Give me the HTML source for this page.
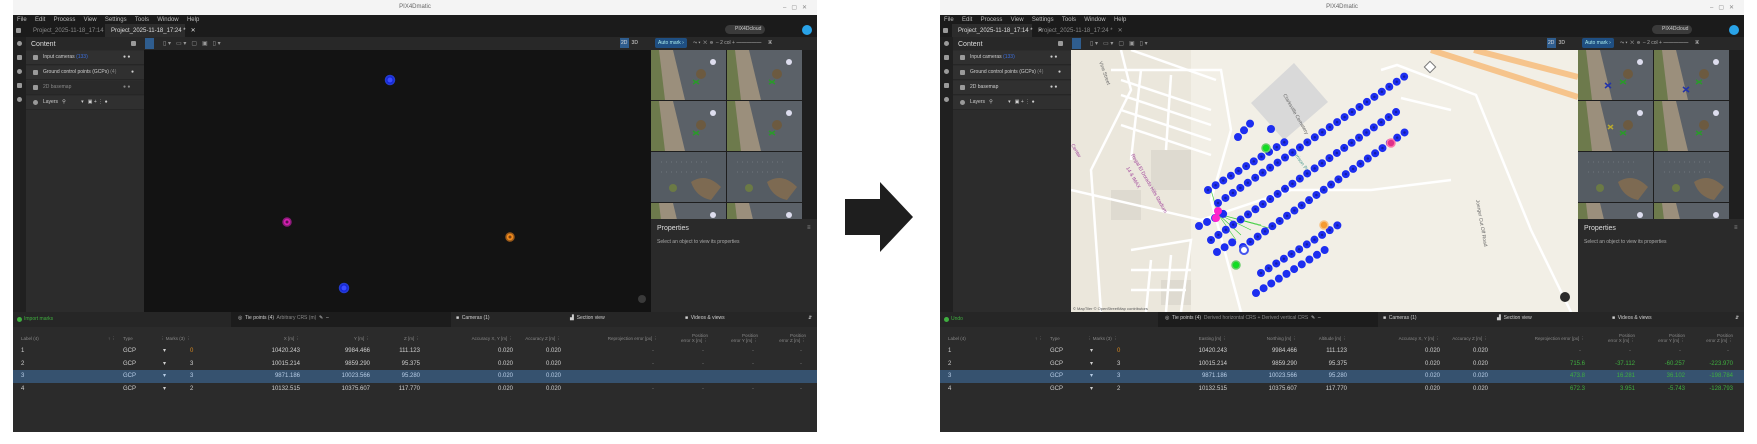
<!DOCTYPE html>
<html><head><meta charset="utf-8">
<style>
*{margin:0;padding:0;box-sizing:border-box}
body{width:1757px;height:444px;background:#fff;position:relative;overflow:hidden;font-family:"Liberation Sans",sans-serif;color:#cfcfcf}
.win{position:absolute;top:0;width:804px;height:432px;background:#2b2b2b;overflow:hidden}
.a{position:absolute}
.t{position:absolute;font-size:6px;white-space:nowrap;line-height:1}
.title{left:0;top:0;width:804px;height:15px;background:#f4f4f4;color:#666;font-size:6px;text-align:center;line-height:15px}
.menu{left:0;top:15px;width:804px;height:22px;background:#1b1b1b}
.tool{left:13px;top:37px;width:791px;height:13px;background:#282828}
.side{left:0;top:37px;width:13px;height:395px;background:#202020}
.cpan{left:13px;top:50px;width:118px;height:262px;background:#2c2c2c}
.row{position:absolute;left:13px;width:118px;height:14px;background:#303030;border-bottom:1px solid #262626}
.vp{left:131px;top:50px;width:507px;height:262px;background:#131313;overflow:hidden}
.rp{left:638px;top:50px;width:152px;height:169px;background:#1e1e1e}
.sc{left:790px;top:50px;width:14px;height:262px;background:#1f1f1f}
.prop{left:638px;top:219px;width:166px;height:93px;background:#2a2a2a}
.btab{left:0;top:312px;width:804px;height:15px;background:#262626}
.tbl{left:0;top:327px;width:804px;height:105px;background:#2b2b2b}
.sel{left:0;top:370px;width:804px;height:13px;background:#36526f}
.r{text-align:right}
.g{color:#3fae3f}
.icon{position:absolute;width:5px;height:5px;border-radius:1px;background:#9a9a9a}
</style></head><body>

<!-- ============ LEFT WINDOW ============ -->
<div class="win" style="left:13px">
 <div class="a title">PIX4Dmatic</div>
 <div class="t" style="left:770px;top:5px;color:#888">–&nbsp;&nbsp;&nbsp;▢&nbsp;&nbsp;&nbsp;✕</div>
 <div class="a menu"></div>
 <div class="t" style="left:4px;top:17px;color:#bbb">File&nbsp;&nbsp;&nbsp;&nbsp;&nbsp;Edit&nbsp;&nbsp;&nbsp;&nbsp;&nbsp;Process&nbsp;&nbsp;&nbsp;&nbsp;&nbsp;View&nbsp;&nbsp;&nbsp;&nbsp;&nbsp;Settings&nbsp;&nbsp;&nbsp;&nbsp;&nbsp;Tools&nbsp;&nbsp;&nbsp;&nbsp;&nbsp;Window&nbsp;&nbsp;&nbsp;&nbsp;&nbsp;Help</div>
 <div class="a" style="left:3px;top:28px;width:5px;height:5px;background:#999;border-radius:1px"></div>
 <div class="t" style="left:20px;top:28px;color:#888">Project_2025-11-18_17:14 *&nbsp;&nbsp;&nbsp;✕</div>
 <div class="a" style="left:92px;top:24px;width:80px;height:13px;background:#2c2c2c"></div>
 <div class="t" style="left:98px;top:28px;color:#ddd">Project_2025-11-18_17:24 *&nbsp;&nbsp;&nbsp;✕</div>
 <div class="a" style="left:712px;top:25px;width:40px;height:9px;background:#3a3a3a;border-radius:5px"></div>
 <div class="t" style="left:722px;top:27px;color:#ccc;font-size:5px">PIX4Dcloud</div>
 <div class="a" style="left:789px;top:25px;width:10px;height:10px;background:#29a3e8;border-radius:50%"></div>
 <div class="a tool"></div>
 <div class="a side"></div>
 <div class="icon" style="left:4px;top:41px;border-radius:50%"></div>
 <div class="icon" style="left:4px;top:55px"></div><div class="icon" style="left:4px;top:69px;border-radius:50%"></div><div class="icon" style="left:4px;top:83px"></div><div class="icon" style="left:4px;top:97px;border-radius:50%"></div>
 <div class="t" style="left:18px;top:41px;color:#ddd;font-size:7px">Content</div>
 <div class="icon" style="left:118px;top:41px"></div>
 <div class="a" style="left:132px;top:38px;width:9px;height:11px;background:#2f5d8e"></div>
 <div class="t" style="left:150px;top:41px;color:#999">▯ ▾&nbsp;&nbsp;&nbsp;▭ ▾&nbsp;&nbsp;&nbsp;▢&nbsp;&nbsp;&nbsp;▣&nbsp;&nbsp;&nbsp;▯ ▾</div>
 <div class="a cpan"></div>
 <div class="row" style="top:51px"></div><div class="row" style="top:66px"></div><div class="row" style="top:81px;background:#2a2a2a"></div><div class="row" style="top:96px"></div>
 <div class="icon" style="left:20px;top:55px"></div><div class="t" style="left:30px;top:55px;font-size:5px">Input cameras <span style="color:#3c6fe0">(133)</span></div><div class="t" style="left:110px;top:55px;font-size:5px">● ●</div>
 <div class="icon" style="left:20px;top:70px"></div><div class="t" style="left:30px;top:70px;font-size:5px">Ground control points (GCPs) <span style="color:#888">(4)</span></div><div class="t" style="left:118px;top:70px;font-size:5px">●</div>
 <div class="icon" style="left:20px;top:85px"></div><div class="t" style="left:30px;top:85px;font-size:5px;color:#888">2D basemap</div><div class="t" style="left:110px;top:85px;font-size:5px;color:#888">● ●</div>
 <div class="icon" style="left:20px;top:100px;border-radius:50%"></div><div class="t" style="left:30px;top:100px;font-size:5px">Layers&nbsp;&nbsp;&nbsp;⚲&nbsp;&nbsp;&nbsp;&nbsp;&nbsp;&nbsp;&nbsp;&nbsp;&nbsp;&nbsp;&nbsp;▾&nbsp;&nbsp;&nbsp;▣&nbsp;+&nbsp;⋮&nbsp;●</div>
 <div class="a vp"></div>
 <div class="a" style="left:607px;top:38px;width:9px;height:10px;background:#2f5d8e"></div>
 <div class="t" style="left:608px;top:41px;font-size:5px;color:#ddd">2D&nbsp;&nbsp;&nbsp;3D</div>
 <svg class="a" style="left:0;top:0" width="804" height="432">
  <circle cx="377" cy="80" r="4.5" fill="#1525d8" stroke="#233bd0" stroke-width="1.5"/><circle cx="377" cy="80" r="2.5" fill="#3a4cff"/>
  <circle cx="274" cy="222" r="4" fill="#d41fb0" stroke="#8a1a78" stroke-width="1.5"/><circle cx="274" cy="222" r="1.5" fill="#5a1050"/>
  <circle cx="497" cy="237" r="4" fill="#f08a1c" stroke="#9a5a1a" stroke-width="1.5"/><circle cx="497" cy="237" r="1.5" fill="#7a4010"/>
  <circle cx="331" cy="288" r="4.5" fill="#1525d8" stroke="#233bd0" stroke-width="1.5"/><circle cx="331" cy="288" r="2.5" fill="#3a4cff"/>
  <circle cx="629" cy="299" r="4" fill="#3a3a3a"/>
 </svg>
 <!-- right panel -->
 <div class="a" style="left:642px;top:38px;width:32px;height:10px;background:#1f4f82;border-radius:2px"></div>
 <div class="t" style="left:645px;top:41px;font-size:5px;color:#aee">Auto mark ›</div>
 <div class="t" style="left:680px;top:41px;font-size:5px;color:#aaa">⤳ ▾&nbsp;&nbsp;✕&nbsp;&nbsp;⊖&nbsp;&nbsp;–&nbsp;2 col&nbsp;+&nbsp;━━━━━&nbsp;&nbsp;&nbsp;&nbsp;&nbsp;▣</div>
 <div class="a rp"></div>
 <svg class="a" style="left:638px;top:50px" width="152" height="169">
  <defs>
   <g id="th"><rect width="75" height="50" fill="#5b6168"/><path d="M0 0H22L34 50H0Z" fill="#9b8f7c"/><path d="M0 0H8L14 50H0Z" fill="#6d7a4c"/><circle cx="50" cy="24" r="5" fill="#6c5a40"/><circle cx="62" cy="12" r="3" fill="#dde"/><path d="M42 30l6 4M48 30l-6 4" stroke="#2a9a2a" stroke-width="1.5"/></g>
   <g id="th2"><rect width="75" height="50" fill="#555c63"/><path d="M40 30Q55 20 70 35L60 48Q45 45 40 30Z" fill="#7d6a52"/><path d="M10 10h50M10 20h50" stroke="#8a9096" stroke-width=".5" stroke-dasharray="1 4"/><circle cx="22" cy="36" r="4" fill="#6b7a45"/></g>
  </defs>
  <use href="#th" x="0" y="0"/><use href="#th" x="76" y="0"/>
  <use href="#th" x="0" y="51"/><use href="#th" x="76" y="51"/>
  <use href="#th2" x="0" y="102"/><use href="#th2" x="76" y="102"/>
  <use href="#th" x="0" y="153"/><use href="#th" x="76" y="153"/>
 </svg>
 <div class="a sc"></div>
 <div class="a prop"></div>
 <div class="t" style="left:644px;top:225px;font-size:7px;color:#ddd">Properties</div>
 <div class="t" style="left:644px;top:240px;font-size:5px;color:#aaa">Select an object to view its properties</div>
 <div class="t" style="left:794px;top:225px;color:#999">≡</div>
 <!-- bottom -->
 <div class="a btab"></div>
 <div class="a" style="left:218px;top:312px;width:220px;height:15px;background:#1c1c1c"></div>
 <div class="a" style="left:4px;top:317px;width:5px;height:5px;border-radius:50%;background:#3fae3f"></div>
 <div class="t g" style="left:11px;top:317px;font-size:5px">Import marks</div>
 <div class="t" style="left:225px;top:316px;font-size:5px">◎&nbsp; Tie points (4)&nbsp; <span style="color:#888">Arbitrary CRS (m)</span>&nbsp;&nbsp;✎&nbsp;&nbsp;–</div>
 <div class="t" style="left:443px;top:316px;font-size:5px">■&nbsp;&nbsp;Cameras (1)</div>
 <div class="t" style="left:557px;top:316px;font-size:5px">▟&nbsp;&nbsp;Section view</div>
 <div class="t" style="left:672px;top:316px;font-size:5px">■&nbsp;&nbsp;Videos &amp; views</div>
 <div class="t" style="left:795px;top:316px;font-size:5px">⇵</div>
 <div class="a tbl"></div>
 <div class="a sel"></div>
 <div class="t" style="left:8px;top:337px;font-size:4.5px;color:#888">Label (4)</div>
 <div class="t" style="left:95px;top:337px;font-size:4.5px;color:#888">↑ ⋮</div>
 <div class="t" style="left:110px;top:337px;font-size:4.5px;color:#888">Type</div>
 <div class="t" style="left:147px;top:337px;font-size:4.5px;color:#888">⋮ Marks (3) ⋮</div>
 <div class="t r" style="right:517px;top:337px;font-size:4.5px;color:#888">X [m] ⋮</div>
 <div class="t r" style="right:447px;top:337px;font-size:4.5px;color:#888">Y [m] ⋮</div>
 <div class="t r" style="right:397px;top:337px;font-size:4.5px;color:#888">Z [m] ⋮</div>
 <div class="t r" style="right:304px;top:337px;font-size:4.5px;color:#888">Accuracy X, Y [m] ⋮</div>
 <div class="t r" style="right:256px;top:337px;font-size:4.5px;color:#888">Accuracy Z [m] ⋮</div>
 <div class="t r" style="right:159px;top:337px;font-size:4.5px;color:#888">Reprojection error [px] ⋮</div>
 <div class="t r" style="right:109px;top:334px;font-size:4.5px;color:#888">Position<br>error X [m] ⋮</div>
 <div class="t r" style="right:59px;top:334px;font-size:4.5px;color:#888">Position<br>error Y [m] ⋮</div>
 <div class="t r" style="right:11px;top:334px;font-size:4.5px;color:#888">Position<br>error Z [m] ⋮</div>
 <div style="position:absolute;left:0;top:348px;width:804px;font-size:5px">
  <div style="position:relative;height:12.5px"><span class="t" style="left:8px">1</span><span class="t" style="left:110px">GCP</span><span class="t" style="left:150px">▾</span><span class="t" style="left:177px;color:#d98a20">0</span><span class="t r" style="right:517px">10420.243</span><span class="t r" style="right:447px">9984.466</span><span class="t r" style="right:397px">111.123</span><span class="t r" style="right:304px">0.020</span><span class="t r" style="right:256px">0.020</span><span class="t r" style="right:163px;color:#777">-</span><span class="t r" style="right:113px;color:#777">-</span><span class="t r" style="right:63px;color:#777">-</span><span class="t r" style="right:15px;color:#777">-</span></div>
  <div style="position:relative;height:12.5px"><span class="t" style="left:8px">2</span><span class="t" style="left:110px">GCP</span><span class="t" style="left:150px">▾</span><span class="t" style="left:177px">3</span><span class="t r" style="right:517px">10015.214</span><span class="t r" style="right:447px">9859.290</span><span class="t r" style="right:397px">95.375</span><span class="t r" style="right:304px">0.020</span><span class="t r" style="right:256px">0.020</span><span class="t r" style="right:163px;color:#777">-</span><span class="t r" style="right:113px;color:#777">-</span><span class="t r" style="right:63px;color:#777">-</span><span class="t r" style="right:15px;color:#777">-</span></div>
  <div style="position:relative;height:12.5px;color:#b8cde6"><span class="t" style="left:8px">3</span><span class="t" style="left:110px">GCP</span><span class="t" style="left:150px">▾</span><span class="t" style="left:177px">3</span><span class="t r" style="right:517px">9871.186</span><span class="t r" style="right:447px">10023.566</span><span class="t r" style="right:397px">95.280</span><span class="t r" style="right:304px">0.020</span><span class="t r" style="right:256px">0.020</span></div>
  <div style="position:relative;height:12.5px"><span class="t" style="left:8px">4</span><span class="t" style="left:110px">GCP</span><span class="t" style="left:150px">▾</span><span class="t" style="left:177px">2</span><span class="t r" style="right:517px">10132.515</span><span class="t r" style="right:447px">10375.607</span><span class="t r" style="right:397px">117.770</span><span class="t r" style="right:304px">0.020</span><span class="t r" style="right:256px">0.020</span><span class="t r" style="right:163px;color:#777">-</span><span class="t r" style="right:113px;color:#777">-</span><span class="t r" style="right:63px;color:#777">-</span><span class="t r" style="right:15px;color:#777">-</span></div>
 </div>
</div>

<!-- ARROW -->
<svg class="a" style="left:840px;top:178px" width="80" height="80"><path d="M5 21H40V4L73 39L40 74V57H5Z" fill="#1e1e1e"/></svg>

<!-- ============ RIGHT WINDOW ============ -->
<div class="win" style="left:940px">
 <div class="a title">PIX4Dmatic</div>
 <div class="t" style="left:770px;top:5px;color:#888">–&nbsp;&nbsp;&nbsp;▢&nbsp;&nbsp;&nbsp;✕</div>
 <div class="a menu"></div>
 <div class="t" style="left:4px;top:17px;color:#bbb">File&nbsp;&nbsp;&nbsp;&nbsp;&nbsp;Edit&nbsp;&nbsp;&nbsp;&nbsp;&nbsp;Process&nbsp;&nbsp;&nbsp;&nbsp;&nbsp;View&nbsp;&nbsp;&nbsp;&nbsp;&nbsp;Settings&nbsp;&nbsp;&nbsp;&nbsp;&nbsp;Tools&nbsp;&nbsp;&nbsp;&nbsp;&nbsp;Window&nbsp;&nbsp;&nbsp;&nbsp;&nbsp;Help</div>
 <div class="a" style="left:3px;top:28px;width:5px;height:5px;background:#999;border-radius:1px"></div>
 <div class="a" style="left:12px;top:24px;width:80px;height:13px;background:#2c2c2c"></div>
 <div class="t" style="left:18px;top:28px;color:#ddd">Project_2025-11-18_17:14 *&nbsp;&nbsp;&nbsp;✕</div>
 <div class="t" style="left:98px;top:28px;color:#888">Project_2025-11-18_17:24 *&nbsp;&nbsp;&nbsp;✕</div>
 <div class="a" style="left:712px;top:25px;width:40px;height:9px;background:#3a3a3a;border-radius:5px"></div>
 <div class="t" style="left:722px;top:27px;color:#ccc;font-size:5px">PIX4Dcloud</div>
 <div class="a" style="left:789px;top:25px;width:10px;height:10px;background:#29a3e8;border-radius:50%"></div>
 <div class="a tool"></div>
 <div class="a side"></div>
 <div class="icon" style="left:4px;top:41px;border-radius:50%"></div>
 <div class="icon" style="left:4px;top:55px"></div><div class="icon" style="left:4px;top:69px;border-radius:50%"></div><div class="icon" style="left:4px;top:83px"></div><div class="icon" style="left:4px;top:97px;border-radius:50%"></div>
 <div class="t" style="left:18px;top:41px;color:#ddd;font-size:7px">Content</div>
 <div class="icon" style="left:118px;top:41px"></div>
 <div class="a" style="left:132px;top:38px;width:9px;height:11px;background:#2f5d8e"></div>
 <div class="t" style="left:150px;top:41px;color:#999">▯ ▾&nbsp;&nbsp;&nbsp;▭ ▾&nbsp;&nbsp;&nbsp;▢&nbsp;&nbsp;&nbsp;▣&nbsp;&nbsp;&nbsp;▯ ▾</div>
 <div class="a cpan"></div>
 <div class="row" style="top:51px"></div><div class="row" style="top:66px"></div><div class="row" style="top:81px"></div><div class="row" style="top:96px"></div>
 <div class="icon" style="left:20px;top:55px"></div><div class="t" style="left:30px;top:55px;font-size:5px">Input cameras <span style="color:#3c6fe0">(133)</span></div><div class="t" style="left:110px;top:55px;font-size:5px">● ●</div>
 <div class="icon" style="left:20px;top:70px"></div><div class="t" style="left:30px;top:70px;font-size:5px">Ground control points (GCPs) <span style="color:#888">(4)</span></div><div class="t" style="left:118px;top:70px;font-size:5px">●</div>
 <div class="icon" style="left:20px;top:85px"></div><div class="t" style="left:30px;top:85px;font-size:5px">2D basemap</div><div class="t" style="left:110px;top:85px;font-size:5px">● ●</div>
 <div class="icon" style="left:20px;top:100px;border-radius:50%"></div><div class="t" style="left:30px;top:100px;font-size:5px">Layers&nbsp;&nbsp;&nbsp;⚲&nbsp;&nbsp;&nbsp;&nbsp;&nbsp;&nbsp;&nbsp;&nbsp;&nbsp;&nbsp;&nbsp;▾&nbsp;&nbsp;&nbsp;▣&nbsp;+&nbsp;⋮&nbsp;●</div>
 <div class="a" style="left:607px;top:38px;width:9px;height:10px;background:#2f5d8e"></div>
 <div class="t" style="left:608px;top:41px;font-size:5px;color:#ddd">2D&nbsp;&nbsp;&nbsp;3D</div>
 <!-- map -->
 <svg class="a" style="left:131px;top:50px" width="507" height="262">
  <rect width="507" height="262" fill="#f2efe6"/>
  <rect x="0" y="0" width="120" height="262" fill="#ebe7dc"/>
  <path d="M180 53L223 13L257 52L213 90Z" fill="#d9d9d9"/>
  <path d="M80 100h40v40h-40zM40 140h30v30h-30zM90 230h30v25h-30z" fill="#dedad0"/>
  <g stroke="#fff" stroke-width="2.5" fill="none">
   <path d="M310 20L326 15L405 45L460 180L500 262"/>
   <path d="M50 0L60 40L20 120L30 262"/>
   <path d="M40 20H150L160 80L140 150L170 262"/>
   <path d="M50 30L140 60M50 45L140 75M50 60L140 90M50 75L140 105M60 0L145 30"/>
   <path d="M70 20L60 110M100 25L95 100"/>
   <path d="M0 140L130 170L220 140L300 140L380 130"/>
   <path d="M60 200L120 190L110 262M80 210L75 262M100 205L95 262M60 220H120M60 240H115"/>
   <path d="M330 48L380 60"/>
  </g>
  <g stroke="#f6c48c" stroke-width="6" fill="none"><path d="M360 0L507 47"/><path d="M403 0L507 27"/></g>
  <rect x="355" y="13" width="8" height="8" fill="#fff" stroke="#777" stroke-width="1" transform="rotate(45 359 17)"/>
  <g font-family="Liberation Sans,sans-serif" font-size="5">
   <text x="28" y="12" fill="#666" transform="rotate(70 28 12)">Vine Street</text>
   <text x="60" y="105" fill="#a0449a" transform="rotate(60 60 105)">Regal El Dorado Hills Stadium</text>
   <text x="55" y="118" fill="#a0449a" transform="rotate(60 55 118)">14 &amp; IMAX</text>
   <text x="212" y="45" fill="#666" transform="rotate(60 212 45)">Clarksville Cemetery</text>
   <text x="0" y="95" fill="#a0449a" transform="rotate(60 0 95)">Center</text>
   <text x="220" y="100" fill="#4a9a90" transform="rotate(55 220 100)">Morrison Park</text>
   <text x="405" y="150" fill="#666" transform="rotate(80 405 150)">Joerger Cut Off Road</text>
   <text x="2" y="260" fill="#555" font-size="4">© MapTiler  © OpenStreetMap contributors</text>
  </g>
  <g stroke="#33cc33" stroke-width=".6"><path d="M147 164L170 185M147 164L180 180M147 164L190 175M147 164L198 178M147 164L140 140M147 164L165 190"/></g>
  <g stroke="#1d2ef0" stroke-width="8" stroke-linecap="round" stroke-dasharray="0 9" fill="none">
   <path d="M137 140L217 90"/>
   <path d="M147 153L340 22"/>
   <path d="M140 190L328 60"/>
   <path d="M172 197L337 80"/>
   <path d="M190 223L267 175"/>
   <path d="M185 243L260 196"/>
   <path d="M167 87L185 67"/>
   <path d="M200 79L201 79"/>
   <path d="M128 176L160 160"/>
   <path d="M146 202L165 190"/>
  </g>
  <g stroke="#0a0f60" stroke-width="2.5" stroke-linecap="round" stroke-dasharray="0 9" fill="none" opacity=".5">
   <path d="M137 140L217 90"/><path d="M147 153L340 22"/><path d="M140 190L328 60"/><path d="M172 197L337 80"/><path d="M190 223L267 175"/>
  </g>
  <circle cx="147" cy="161" r="4" fill="#ff22cc"/><circle cx="145" cy="168" r="4" fill="#ff22cc"/>
  <circle cx="195" cy="98" r="4" fill="#11dd22" stroke="#6c6" stroke-width="1.5"/>
  <circle cx="165" cy="215" r="4" fill="#11dd22" stroke="#6c6" stroke-width="1.5"/>
  <circle cx="253" cy="175" r="4" fill="#f59a30" stroke="#f8c080" stroke-width="1.5"/>
  <circle cx="320" cy="93" r="4" fill="#e0308a" stroke="#f7a" stroke-width="1.5"/>
  <circle cx="173" cy="200" r="4" fill="#fff" stroke="#4455ee" stroke-width="2"/>
  <circle cx="494" cy="247" r="5" fill="#2a2a2a"/>
 </svg>
 <!-- right panel -->
 <div class="a" style="left:642px;top:38px;width:32px;height:10px;background:#1f4f82;border-radius:2px"></div>
 <div class="t" style="left:645px;top:41px;font-size:5px;color:#aee">Auto mark ›</div>
 <div class="t" style="left:680px;top:41px;font-size:5px;color:#aaa">⤳ ▾&nbsp;&nbsp;✕&nbsp;&nbsp;⊖&nbsp;&nbsp;–&nbsp;2 col&nbsp;+&nbsp;━━━━━&nbsp;&nbsp;&nbsp;&nbsp;&nbsp;▣</div>
 <div class="a rp"></div>
 <svg class="a" style="left:638px;top:50px" width="152" height="169">
  <use href="#th" x="0" y="0"/><use href="#th" x="76" y="0"/>
  <use href="#th" x="0" y="51"/><use href="#th" x="76" y="51"/>
  <use href="#th2" x="0" y="102"/><use href="#th2" x="76" y="102"/>
  <use href="#th" x="0" y="153"/><use href="#th" x="76" y="153"/>
  <path d="M27 33l6 5M33 33l-6 5" stroke="#2233aa" stroke-width="1.5"/><path d="M105 37l6 5M111 37l-6 5" stroke="#2233aa" stroke-width="1.5"/>
  <path d="M30 75l5 4M35 75l-5 4" stroke="#b8a830" stroke-width="1.5"/>
 </svg>
 <div class="a sc"></div>
 <div class="a prop"></div>
 <div class="t" style="left:644px;top:225px;font-size:7px;color:#ddd">Properties</div>
 <div class="t" style="left:644px;top:240px;font-size:5px;color:#aaa">Select an object to view its properties</div>
 <div class="t" style="left:794px;top:225px;color:#999">≡</div>
 <!-- bottom -->
 <div class="a btab"></div>
 <div class="a" style="left:218px;top:312px;width:220px;height:15px;background:#1c1c1c"></div>
 <div class="a" style="left:4px;top:317px;width:5px;height:5px;border-radius:50%;background:#3fae3f"></div>
 <div class="t g" style="left:11px;top:317px;font-size:5px">Undo</div>
 <div class="t" style="left:225px;top:316px;font-size:5px">◎&nbsp; Tie points (4)&nbsp; <span style="color:#888">Derived horizontal CRS + Derived vertical CRS</span>&nbsp;&nbsp;✎&nbsp;&nbsp;–</div>
 <div class="t" style="left:443px;top:316px;font-size:5px">■&nbsp;&nbsp;Cameras (1)</div>
 <div class="t" style="left:557px;top:316px;font-size:5px">▟&nbsp;&nbsp;Section view</div>
 <div class="t" style="left:672px;top:316px;font-size:5px">■&nbsp;&nbsp;Videos &amp; views</div>
 <div class="t" style="left:795px;top:316px;font-size:5px">⇵</div>
 <div class="a tbl"></div>
 <div class="a sel"></div>
 <div class="t" style="left:8px;top:337px;font-size:4.5px;color:#888">Label (4)</div>
 <div class="t" style="left:95px;top:337px;font-size:4.5px;color:#888">↑ ⋮</div>
 <div class="t" style="left:110px;top:337px;font-size:4.5px;color:#888">Type</div>
 <div class="t" style="left:147px;top:337px;font-size:4.5px;color:#888">⋮ Marks (3) ⋮</div>
 <div class="t r" style="right:517px;top:337px;font-size:4.5px;color:#888">Easting [m] ⋮</div>
 <div class="t r" style="right:447px;top:337px;font-size:4.5px;color:#888">Northing [m] ⋮</div>
 <div class="t r" style="right:397px;top:337px;font-size:4.5px;color:#888">Altitude [m] ⋮</div>
 <div class="t r" style="right:304px;top:337px;font-size:4.5px;color:#888">Accuracy X, Y [m] ⋮</div>
 <div class="t r" style="right:256px;top:337px;font-size:4.5px;color:#888">Accuracy Z [m] ⋮</div>
 <div class="t r" style="right:159px;top:337px;font-size:4.5px;color:#888">Reprojection error [px] ⋮</div>
 <div class="t r" style="right:109px;top:334px;font-size:4.5px;color:#888">Position<br>error X [m] ⋮</div>
 <div class="t r" style="right:59px;top:334px;font-size:4.5px;color:#888">Position<br>error Y [m] ⋮</div>
 <div class="t r" style="right:11px;top:334px;font-size:4.5px;color:#888">Position<br>error Z [m] ⋮</div>
 <div style="position:absolute;left:0;top:348px;width:804px;font-size:5px">
  <div style="position:relative;height:12.5px"><span class="t" style="left:8px">1</span><span class="t" style="left:110px">GCP</span><span class="t" style="left:150px">▾</span><span class="t" style="left:177px;color:#d98a20">0</span><span class="t r" style="right:517px">10420.243</span><span class="t r" style="right:447px">9984.466</span><span class="t r" style="right:397px">111.123</span><span class="t r" style="right:304px">0.020</span><span class="t r" style="right:256px">0.020</span><span class="t r" style="right:163px;color:#777">-</span><span class="t r" style="right:113px;color:#777">-</span><span class="t r" style="right:63px;color:#777">-</span><span class="t r" style="right:15px;color:#777">-</span></div>
  <div style="position:relative;height:12.5px"><span class="t" style="left:8px">2</span><span class="t" style="left:110px">GCP</span><span class="t" style="left:150px">▾</span><span class="t" style="left:177px">3</span><span class="t r" style="right:517px">10015.214</span><span class="t r" style="right:447px">9859.290</span><span class="t r" style="right:397px">95.375</span><span class="t r" style="right:304px">0.020</span><span class="t r" style="right:256px">0.020</span><span class="t r g" style="right:159px">715.6</span><span class="t r g" style="right:109px">-37.112</span><span class="t r g" style="right:59px">-60.257</span><span class="t r g" style="right:11px">-223.970</span></div>
  <div style="position:relative;height:12.5px;color:#b8cde6"><span class="t" style="left:8px">3</span><span class="t" style="left:110px">GCP</span><span class="t" style="left:150px">▾</span><span class="t" style="left:177px">3</span><span class="t r" style="right:517px">9871.186</span><span class="t r" style="right:447px">10023.566</span><span class="t r" style="right:397px">95.280</span><span class="t r" style="right:304px">0.020</span><span class="t r" style="right:256px">0.020</span><span class="t r g" style="right:159px">473.8</span><span class="t r g" style="right:109px">16.281</span><span class="t r g" style="right:59px">36.102</span><span class="t r g" style="right:11px">-198.784</span></div>
  <div style="position:relative;height:12.5px"><span class="t" style="left:8px">4</span><span class="t" style="left:110px">GCP</span><span class="t" style="left:150px">▾</span><span class="t" style="left:177px">2</span><span class="t r" style="right:517px">10132.515</span><span class="t r" style="right:447px">10375.607</span><span class="t r" style="right:397px">117.770</span><span class="t r" style="right:304px">0.020</span><span class="t r" style="right:256px">0.020</span><span class="t r g" style="right:159px">672.3</span><span class="t r g" style="right:109px">3.951</span><span class="t r g" style="right:59px">-5.743</span><span class="t r g" style="right:11px">-128.793</span></div>
 </div>
</div>
</body></html>
